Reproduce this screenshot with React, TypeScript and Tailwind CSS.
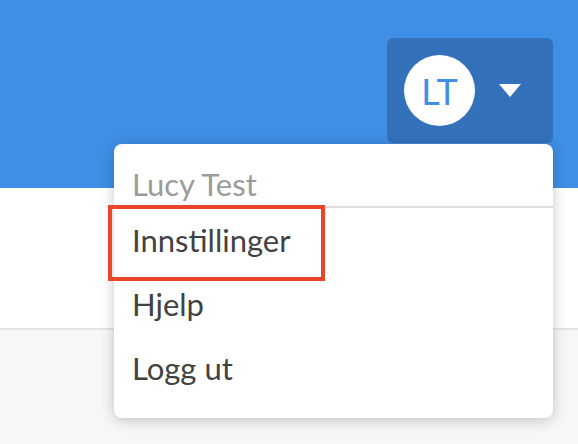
export default function App() {
  return (
    <div className="relative w-[578px] h-[444px] overflow-hidden bg-[#f7f7f7] font-['Lato',sans-serif]">
      <header className="h-[188px] bg-[#3f8fe6] flex justify-end items-start pt-[38px] pr-[25px]">
        <button className="w-[166px] h-[105px] rounded-[6px] bg-[#3372bb] flex items-center pl-[17px]">
          <span className="w-[71px] h-[71px] rounded-full bg-white flex items-center justify-center text-[#3f8fe6] text-[36px] leading-none">
            LT
          </span>
          <svg className="ml-[24px]" width="22" height="13" viewBox="0 0 22 13">
            <path d="M0 0 L22 0 L11 13 Z" fill="#fff" />
          </svg>
        </button>
      </header>
      <div className="h-[142px] bg-white border-b-2 border-[#e3e3e3]" />

      {/* dropdown */}
      <div className="absolute left-[114px] top-[144px] w-[439px] h-[274px] bg-white rounded-[8px] shadow-[0_2px_14px_rgba(0,0,0,0.22)]">
        <div className="h-[64px] px-[18px] pt-[23px] text-[31px] leading-[34px] text-[#9b9b9b] border-b-2 border-[#dddddd]">
          Lucy Test
        </div>
        <div className="px-[18px] pt-[15px] text-[31px] leading-[34px] text-[#424242]">
          Innstillinger
        </div>
        <div className="px-[18px] pt-[30px] text-[31px] leading-[34px] text-[#424242]">
          Hjelp
        </div>
        <div className="px-[18px] pt-[30px] text-[31px] leading-[34px] text-[#424242]">
          Logg ut
        </div>
      </div>

      {/* highlight annotation */}
      <div className="absolute left-[108px] top-[205px] w-[217px] h-[76px] border-4 border-[#e8452a]" />
    </div>
  );
}
